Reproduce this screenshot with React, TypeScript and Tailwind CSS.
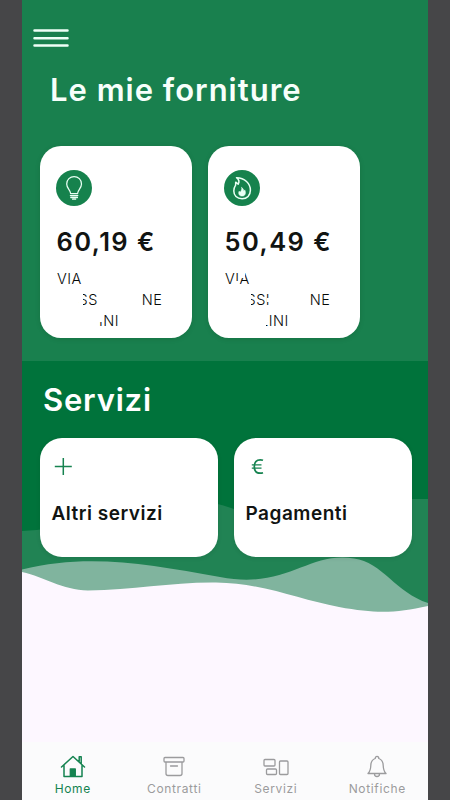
import type { ReactNode } from "react";

function Bulb() {
  return (
    <svg className="size-9" viewBox="0 0 36 36" fill="none" stroke="#e9fff4" strokeWidth="1.25" strokeLinecap="round" strokeLinejoin="round">
      <path d="M14.600 23.500c0-3.600-3.900-5.100-3.900-9.600a7.400 7.400 0 0 1 14.800 0c0 4.500-3.900 6-3.900 9.600z" />
      <path d="M14.400 25.600h7.400M14.800 27.500h6.600M16.600 29.200h3" strokeWidth="1.300" />
    </svg>
  );
}

function Flame() {
  return (
    <svg className="size-9" viewBox="0 0 36 36" fill="none" stroke="#e9fff4" strokeWidth="1.500" strokeLinecap="round" strokeLinejoin="round">
      <path d="M12.500 7.700c8.200.1 13.900 5.700 13.900 12.500 0 5.200-3.400 8.600-8.300 8.600-5.300 0-8.300-3.500-8.300-7.700 0-2.600.8-4.400 1.800-5.900l.1-3 2.500 2c1.500-2.500.7-4.700-1.700-6.500z" />
      <path d="M17.700 17.600c2 1.400 2.100 2.400 2 3.700l1.100-1.400c1.200 2.200 1.100 6.200-2.800 6.200-3 0-3.800-2.500-3-4.800l1.300.8c1.200-1.500 1.600-2.700 1.400-4.500z" fill="#e9fff4" strokeWidth=".5" />
    </svg>
  );
}

function SupplyCard({ icon, amount, children }: { icon: ReactNode; amount: string; children: ReactNode }) {
  return (
    <article className="h-[192px] w-[152px] rounded-[21px] bg-white pl-4 pt-6 shadow-[0_1px_5px_rgba(0,40,15,0.15)]">
      <div className="size-9 rounded-full bg-[#16824d]">{icon}</div>
      <div className="mt-4 h-10 whitespace-nowrap pl-[0.5px] text-[25.5px] font-semibold leading-10 tracking-[1.45px] text-[#111412]">{amount}</div>
      <div className="mt-[6px] text-[14.5px] font-light leading-[21px] tracking-[0.5px] text-[#050807]">{children}</div>
    </article>
  );
}

function ServiceCard({ icon, label }: { icon: ReactNode; label: string }) {
  return (
    <article className="h-[119px] w-[178px] rounded-[22px] bg-white pl-[11px] pt-4 shadow-[0_1px_4px_rgba(0,40,15,0.12)]">
      <div className="h-6">{icon}</div>
      <div className="mt-[21px] whitespace-nowrap pl-[0.5px] text-[19px] font-semibold leading-[30px] tracking-[0.5px] text-[#111412]">{label}</div>
    </article>
  );
}

function Tab({ label, active = false, children }: { label: string; active?: boolean; children: ReactNode }) {
  return (
    <div className={"flex flex-1 flex-col items-center pt-3 " + (active ? "text-[#158350]" : "text-[#9b9b9d]")}>
      <svg className="h-[25px] w-7 overflow-visible" viewBox="0 0 28 25" fill="none" stroke="currentColor" strokeWidth="1.300" strokeLinecap="round" strokeLinejoin="round">
        {children}
      </svg>
      <span className="-mt-px text-[12px] leading-[21px] tracking-[0.65px]">{label}</span>
    </div>
  );
}

export default function App() {
  return (
    <div className="flex h-[800px] w-[450px] justify-center overflow-hidden bg-[#464648] px-[22px] font-['Inter','Liberation_Sans',sans-serif]">
      <main className="flex w-[406px] flex-col bg-[#fdf7ff]">
        <section className="h-[361px] bg-[#19804e]">
          <div className="pl-[11px] pt-[28px]">
            <svg className="block h-5 w-9" viewBox="0 0 36 20" stroke="#effff7" strokeWidth="2.500" strokeLinecap="round">
              <path d="M1.500 2.500h33M1.500 10.200h33M1.500 17.600h33" />
            </svg>
          </div>
          <h1 className="mt-[22px] h-[40px] whitespace-nowrap pl-[28px] text-[31px] font-semibold leading-10 tracking-[1px] text-[#f7fffb]">Le mie forniture</h1>
          <div className="mt-[36px] flex gap-4 pl-[18px]">
            <SupplyCard icon={<Bulb />} amount="60,19 €">
              <div className="pl-px">VIA</div>
              <div className="flex pl-[22.5px]">
                <span className="relative before:absolute before:inset-y-0 before:left-0 before:w-[4.5px] before:bg-white">SS</span>
                <span className="ml-[44px]">NE</span>
              </div>
              <div className="flex pl-[43px]">
                <span className="relative before:absolute before:left-0 before:top-0 before:h-3 before:w-[4px] before:bg-white">INI</span>
              </div>
            </SupplyCard>
            <SupplyCard icon={<Flame />} amount="50,49 €">
              <div className="flex pl-px">
                <span>V</span>
                <span className="relative before:absolute before:inset-x-0 before:bottom-0 before:h-[8px] before:bg-white">I</span>
                <span className="relative before:absolute before:left-0 before:top-0 before:h-[10px] before:w-[5px] before:bg-white">A</span>
              </div>
              <div className="flex pl-[22.5px]">
                <span className="relative before:absolute before:inset-y-0 before:left-0 before:w-[4.5px] before:bg-white">SS</span>
                <span className="relative after:absolute after:left-[1px] after:top-[9px] after:h-[4px] after:w-[3px] after:bg-white">I</span>
                <span className="ml-[39.5px]">NE</span>
              </div>
              <div className="flex pl-[36px]">
                <span className="relative before:absolute before:left-0 before:top-0 before:h-[14px] before:w-full before:bg-white after:absolute after:bottom-0 after:left-0 after:h-[8px] after:w-[6px] after:bg-white">L</span>
                <span>INI</span>
              </div>
            </SupplyCard>
          </div>
        </section>
        <section className="relative h-[381px]">
          <svg className="absolute inset-0 h-[381px] w-[406px]" viewBox="0 0 406 381">
            <path fill="#00733b" d="M0 0H406V260H0z" />
            <path fill="#218354" d="M0 170C55 168 75 147 140 140C175 137 195 142 212 148C270 167 330 140 390 138H406V260H0z" />
            <path fill="#80b49e" d="M0 208.500C66 192 126 203 198 216C265 229 286 190 332 197.500C360 201 374 232 406 242V260H0z" />
            <path fill="#fdf7ff" d="M0 211C23 216 40 229 66 229.500C112 229 150 221 194 221.500C241 222 278 239 317 246C355 253 374 252 406 245V381H0z" />
          </svg>
          <div className="relative">
            <h2 className="h-[77px] pl-[21px] pt-[18.5px] text-[31px] font-semibold leading-10 tracking-[0.8px] text-white">Servizi</h2>
            <div className="flex gap-4 pl-[18px]">
              <ServiceCard label="Altri servizi" icon={<svg className="size-6" viewBox="0 0 24 24" fill="none" stroke="#168350" strokeWidth="1.500"><path d="M3.800 12.400h17M12.300 4v17" /></svg>} />
              <ServiceCard label="Pagamenti" icon={<svg className="size-6" viewBox="0 0 24 24" fill="none" stroke="#168350" strokeWidth="1.700"><path d="M18 6.300c-1-.4-1.800-.5-2.700-.5-4 0-6 2.600-6 6.700s2 6.700 6 6.700c.9 0 1.700-.1 2.700-.5" /><path d="M6.800 10.900h9.700M6.800 14.100h9.700" strokeWidth="1.300" /></svg>} />
            </div>
          </div>
        </section>
        <nav className="flex h-[58px] bg-[#fbfbfc]">
          <Tab label="Home" active>
            <path d="M2.500 13 14 2.500l11.500 10.500M5 11v11.500h18V11M20.200 7.500V2.700h2v7.300" strokeWidth="1.500" />
            <path d="M11.300 15h5v7h-5z" fill="currentColor" />
          </Tab>
          <Tab label="Contratti">
            <path d="M5 3.500h18q1 0 1 1v2.500q0 1-1 1H5q-1 0-1-1V4.500q0-1 1-1zM6 8v11.500q0 2 2 2h12q2 0 2-2V8M10.500 12h7" />
          </Tab>
          <Tab label="Servizi">
            <path d="M3 5.500h9q1 0 1 1v4.500q0 1-1 1H3q-1 0-1-1V6.500q0-1 1-1zM5.500 15h8q1 0 1 1v3.500q0 1-1 1h-8q-1 0-1-1V16q0-1 1-1zM18.500 7h6.500q1 0 1 1v11.500q0 1-1 1h-6.500q-1 0-1-1V8q0-1 1-1z" />
          </Tab>
          <Tab label="Notifiche">
            <path d="M5 19.500q2.600-2.500 2.800-8c.1-3.500 1.500-6 4.400-7 0-2.900 3.600-2.900 3.600 0 2.900 1 4.300 3.500 4.400 7q.2 5.500 2.800 8zM11.500 20q0 2.500 2.500 2.500t2.500-2.500" />
          </Tab>
        </nav>
      </main>
    </div>
  );
}
